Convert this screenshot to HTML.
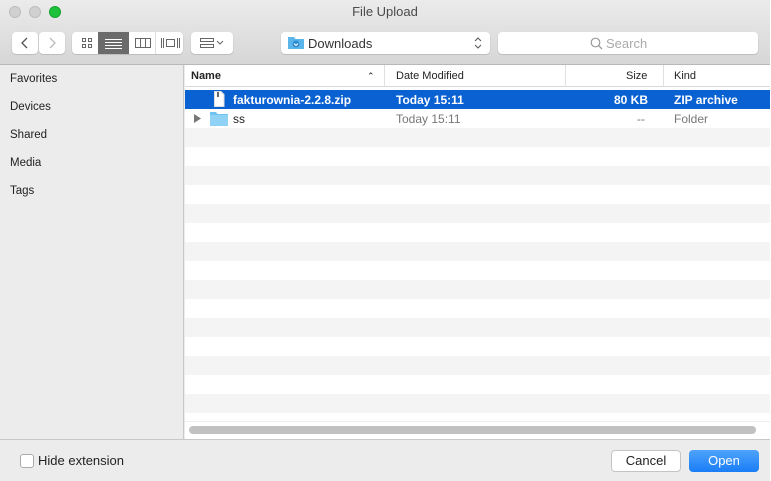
<!DOCTYPE html>
<html><head><style>
*{margin:0;padding:0;box-sizing:border-box}
body{width:771px;height:481px;overflow:hidden;font-family:"Liberation Sans",sans-serif;font-size:12px;color:#222;background:#fff;position:relative}
.win{position:absolute;left:0;top:0;width:770px;height:481px;background:#ececec;border-right:1px solid #9a9a9a}
.tb{position:absolute;left:0;top:0;width:770px;height:65px;background:linear-gradient(#ebebeb,#d6d6d6);border-bottom:1px solid #b8b8b8}
.dot{position:absolute;top:6px;width:12px;height:12px;border-radius:50%}
.title{position:absolute;top:4px;left:0;width:770px;text-align:center;font-size:13px;color:#4a4a4a}
.btn{position:absolute;top:32px;height:22px;background:#fff;border-radius:4px;box-shadow:0 0.5px 1px rgba(0,0,0,.25)}
.side{position:absolute;left:0;top:65px;width:184px;height:374px;background:#ececec;border-right:1px solid #c8c8c8}
.side div{position:absolute;left:10px;font-size:11.5px;color:#222}
.list{position:absolute;left:185px;top:65px;width:585px;height:374px;background:#fff}
.hdr{position:absolute;top:0;left:0;width:585px;height:22px;background:#fff;border-bottom:1px solid #d8d8d8;font-size:11px}
.hdr span{position:absolute;top:5px}
.sep{position:absolute;top:0;width:1px;height:22px;background:#e0e0e0}
.row{position:absolute;left:0;width:585px;height:19px}
.row span{position:absolute;top:3px;font-size:12px}
.bot{position:absolute;left:0;top:439px;width:770px;height:42px;background:#ececec;border-top:1px solid #c8c8c8}
</style></head><body>
<div class="win">
<div class="tb">
 <div class="dot" style="left:9px;background:#d0d0d0;border:1px solid #bdbdbd"></div>
 <div class="dot" style="left:29px;background:#d0d0d0;border:1px solid #bdbdbd"></div>
 <div class="dot" style="left:49px;background:#1dc23a;border:1px solid #16a42e"></div>
 <div class="title">File Upload</div>
 <div class="btn" style="left:12px;width:26px"><svg width="26" height="22"><path d="M15 6 L10 11 L15 16" stroke="#555" stroke-width="1.3" fill="none"/></svg></div>
 <div class="btn" style="left:39px;width:26px"><svg width="26" height="22"><path d="M11 6 L16 11 L11 16" stroke="#bbb" stroke-width="1.3" fill="none"/></svg></div>
 <div class="btn" style="left:72px;width:111px;overflow:hidden">
  <svg width="111" height="22">
   <g fill="none" stroke="#666" stroke-width="1"><rect x="10.5" y="6.5" width="3" height="3"/><rect x="16.5" y="6.5" width="3" height="3"/><rect x="10.5" y="12.5" width="3" height="3"/><rect x="16.5" y="12.5" width="3" height="3"/></g>
   <rect x="26" y="0" width="31" height="22" fill="#6b6b6b"/>
   <g stroke="#fff"><line x1="33" y1="7.5" x2="50" y2="7.5"/><line x1="33" y1="10.5" x2="50" y2="10.5"/><line x1="33" y1="13.5" x2="50" y2="13.5"/><line x1="33" y1="16.5" x2="50" y2="16.5"/></g>
   <line x1="83.5" y1="0" x2="83.5" y2="22" stroke="#ddd"/>
   <g fill="none" stroke="#666"><rect x="63.5" y="6.5" width="15" height="9"/><line x1="68.5" y1="6.5" x2="68.5" y2="15.5"/><line x1="73.5" y1="6.5" x2="73.5" y2="15.5"/>
   <line x1="89.5" y1="6" x2="89.5" y2="16"/><line x1="91.5" y1="6" x2="91.5" y2="16"/><rect x="94.5" y="7.5" width="8" height="7"/><line x1="105.5" y1="6" x2="105.5" y2="16"/><line x1="107.5" y1="6" x2="107.5" y2="16"/></g>
  </svg></div>
 <div class="btn" style="left:191px;width:42px"><svg width="42" height="22"><g fill="none" stroke="#666"><rect x="9.5" y="6.5" width="13" height="3"/><rect x="9.5" y="12.5" width="13" height="3"/><path d="M26 9 L29 12 L32 9"/></g></svg></div>
 <div class="btn" style="left:281px;width:209px"><svg width="20" height="22" style="position:absolute;left:6px;top:0"><path d="M1 5 h6 l1.5 2 H17 V17 H1 Z" fill="#5ab5ea"/><circle cx="9" cy="12" r="3.5" fill="#2d8ad0"/><path d="M7 11.5 L9 13.5 L11 11.5" stroke="#fff" fill="none"/></svg>
  <span style="position:absolute;left:27px;top:4px;font-size:13px;color:#333">Downloads</span>
  <svg width="10" height="22" style="position:absolute;right:7px;top:0"><path d="M2 9 L5 6 L8 9 M2 13 L5 16 L8 13" stroke="#555" fill="none"/></svg></div>
 <div class="btn" style="left:498px;width:260px"><svg width="14" height="14" style="position:absolute;left:92px;top:5px"><circle cx="5.5" cy="5.5" r="4.3" stroke="#999" fill="none" stroke-width="1.2"/><line x1="8.6" y1="8.6" x2="12" y2="12" stroke="#999" stroke-width="1.3"/></svg><span style="position:absolute;left:108px;top:4px;font-size:13px;color:#aaa">Search</span></div>
</div>
<div class="side">
 <div style="top:8px">Favorites</div><div style="top:36px">Devices</div><div style="top:64px">Shared</div><div style="top:92px">Media</div><div style="top:120px">Tags</div>
</div>
<div class="list">
 <div style="position:absolute;left:0;top:0;width:585px;height:356px;background:repeating-linear-gradient(#fff 0 19px,#f4f4f4 19px 38px);background-position:0 6px"></div>
 <div class="hdr"><span style="left:6px;font-weight:bold">Name</span><span style="left:182px;top:6px;font-size:9px">&#8963;</span><div class="sep" style="left:199px"></div><span style="left:211px">Date Modified</span><div class="sep" style="left:380px"></div><span style="left:441px">Size</span><div class="sep" style="left:478px"></div><span style="left:489px">Kind</span></div>
 <div class="row" style="top:25px;background:#0a61d1;color:#fff;font-weight:bold"><svg width="12" height="16" style="position:absolute;left:28px;top:1px"><path d="M1.5 .5 H8 L11 3.5 V15.5 H1.5 Z" fill="#fff" stroke="#ddd"/><path d="M5 1 V6" stroke="#333" stroke-width="1.5"/></svg><span style="left:48px;color:#fff">fakturownia-2.2.8.zip</span><span style="left:211px;color:#fff">Today 15:11</span><span style="left:429px;color:#fff">80 KB</span><span style="left:489px;color:#fff">ZIP archive</span></div>
 <div class="row" style="top:44px;background:#fff"><svg width="10" height="19" style="position:absolute;left:8px;top:0"><path d="M1 5 L8 9.5 L1 14 Z" fill="#777"/></svg><svg width="18" height="15" style="position:absolute;left:25px;top:2px"><path d="M0 1 h6 l1.5 2 H18 V15 H0 Z" fill="#6ec3f0"/><rect x="0" y="4" width="18" height="11" fill="#8fd2f5"/></svg><span style="left:48px">ss</span><span style="left:211px;color:#777">Today 15:11</span><span style="left:452px;color:#777">--</span><span style="left:489px;color:#777">Folder</span></div>
 <div style="position:absolute;left:0;top:356px;width:585px;height:18px;background:#fff;border-top:1px solid #eee"></div>
 <div style="position:absolute;left:4px;top:361px;width:567px;height:8px;border-radius:4px;background:#c1c1c1"></div>
</div>
<div class="bot">
 <div style="position:absolute;left:20px;top:14px;width:14px;height:14px;background:#fff;border:1px solid #aaa;border-radius:3px"></div>
 <span style="position:absolute;left:38px;top:13px;font-size:13px">Hide extension</span>
 <div style="position:absolute;left:611px;top:10px;width:70px;height:22px;background:#fff;border:1px solid #c4c4c4;border-radius:4px;text-align:center;line-height:20px;font-size:13px">Cancel</div>
 <div style="position:absolute;left:689px;top:10px;width:70px;height:22px;background:linear-gradient(#4ea3fb,#1a7df7);border-radius:4px;text-align:center;line-height:22px;font-size:13px;color:#fff">Open</div>
</div>
</div>
</body></html>
